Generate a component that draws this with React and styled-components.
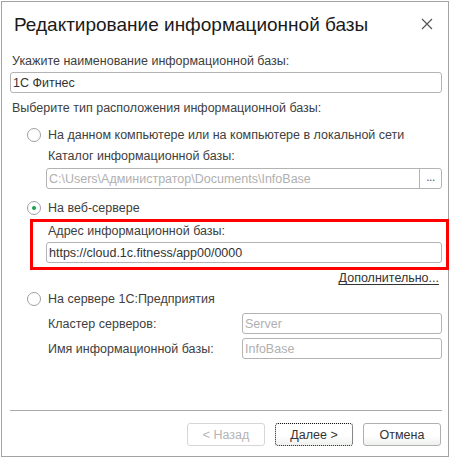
import React from "react";
import styled, { createGlobalStyle } from "styled-components";

const Global = createGlobalStyle`
  html, body { margin: 0; padding: 0; background: #fff; }
  body { font-family: "Liberation Sans", Arial, sans-serif; }
  * { box-sizing: border-box; }
`;

const Frame = styled.div`
  margin: 1px 0 0 1px;
  width: 448px;
  height: 456px;
  border: 1px solid #a3a3a3;
  background: #fff;
  display: flex;
  flex-direction: column;
  color: #404040;
  font-size: 12.5px;
`;

const Header = styled.div`
  display: flex;
  align-items: center;
  justify-content: space-between;
  height: 44px;
  padding: 0 15px 0 12px;
`;

const Title = styled.div`
  font-size: 19px;
  color: #1a1a1a;
  line-height: 24px;
  margin-top: 2px;
`;

const Close = styled.button`
  border: 0;
  background: none;
  padding: 0;
  width: 12px;
  height: 12px;
  display: flex;
`;

const Body = styled.div`
  flex: 1;
  display: flex;
  flex-direction: column;
  padding: 0 6px 0 8px;
`;

const Label = styled.div`
  line-height: 16px;
  height: 16px;
  margin-top: ${(p) => p.$mt || 0}px;
  margin-left: ${(p) => p.$ml ?? 2}px;
  white-space: nowrap;
`;

const Field = styled.div`
  height: 21px;
  margin-top: ${(p) => p.$mt || 0}px;
  margin-left: ${(p) => p.$ml || 0}px;
  border: 1px solid #b3b3b3;
  border-radius: 3px;
  display: flex;
  align-items: center;
  color: ${(p) => (p.$disabled ? "#b0b0b0" : "#333")};
  background: #fff;
  overflow: hidden;
`;

const FieldText = styled.span`
  flex: 1;
  padding-left: 2px;
  white-space: nowrap;
`;

const Choose = styled.span`
  width: 22px;
  height: 100%;
  border-left: 1px solid #b3b3b3;
  display: flex;
  align-items: center;
  justify-content: center;
  color: #555;
  font-size: 12px;
  letter-spacing: -0.5px;
  padding-bottom: 3px;
`;

const RadioRow = styled.label`
  display: flex;
  align-items: center;
  gap: 7px;
  height: 16px;
  margin-top: ${(p) => p.$mt || 0}px;
  margin-left: 17px;
  white-space: nowrap;
`;

const Radio = styled.span`
  width: 14px;
  height: 14px;
  border-radius: 50%;
  border: 1px solid #a0a0a0;
  background: #fff;
  display: flex;
  align-items: center;
  justify-content: center;
  &::after {
    content: "";
    width: 4px;
    height: 4px;
    border-radius: 50%;
    background: ${(p) => (p.$on ? "#16a04a" : "transparent")};
  }
`;

const Highlight = styled.div`
  margin-top: 3px;
  margin-left: 20px;
  margin-right: -7px;
  height: 51px;
  border: 3px solid #f00;
  padding: 1px 4px 0 13px;
  display: flex;
  flex-direction: column;
`;

const MoreLink = styled.a`
  align-self: flex-end;
  line-height: 16px;
  height: 16px;
  margin-right: 3px;
  color: #333;
  text-decoration: underline;
  text-underline-offset: 2px;
`;

const ParamRow = styled.div`
  display: grid;
  grid-template-columns: 196px 1fr;
  align-items: center;
  margin-top: ${(p) => p.$mt || 0}px;
  margin-left: 36px;
  height: 21px;
`;

const Footer = styled.div`
  padding: 0 6px 10px 8px;
`;

const Separator = styled.div`
  height: 1px;
  background: #a8a8a8;
`;

const Buttons = styled.div`
  display: flex;
  justify-content: flex-end;
  gap: 10px;
  margin-top: 12px;
  padding-right: 1px;
`;

const Button = styled.button`
  width: 78px;
  height: 23px;
  font-family: inherit;
  font-size: 12.5px;
  border-radius: 3px;
  padding: 0;
  border: 1px ${(p) => (p.$focus ? "dotted #111" : "solid #b0b0b0")};
  border-color: ${(p) => (p.$disabled ? "#d6d6d6" : undefined)};
  color: ${(p) => (p.$disabled ? "#b4b4b4" : "#333")};
  background: ${(p) =>
    p.$disabled ? "#fff" : "linear-gradient(#ffffff 0%, #ffffff 55%, #eef0ee 100%)"};
`;

export default function App() {
  return (
    <>
      <Global />
      <Frame>
        <Header>
          <Title>Редактирование информационной базы</Title>
          <Close aria-label="Закрыть">
            <svg width="12" height="12" viewBox="0 0 12 12">
              <path d="M1 1L11 11M11 1L1 11" stroke="#555" strokeWidth="1.2" />
            </svg>
          </Close>
        </Header>
        <Body>
          <Label $mt={7}>Укажите наименование информационной базы:</Label>
          <Field $mt={3}>
            <FieldText>1С Фитнес</FieldText>
          </Field>
          <Label $mt={7}>Выберите тип расположения информационной базы:</Label>

          <RadioRow $mt={11}>
            <Radio />
            На данном компьютере или на компьютере в локальной сети
          </RadioRow>
          <Label $mt={5} $ml={38}>Каталог информационной базы:</Label>
          <Field $mt={4} $ml={36} $disabled>
            <FieldText>C:\Users\Администратор\Documents\InfoBase</FieldText>
            <Choose>...</Choose>
          </Field>

          <RadioRow $mt={11}>
            <Radio $on />
            На веб-сервере
          </RadioRow>
          <Highlight>
            <Label>Адрес информационной базы:</Label>
            <Field $mt={3}>
              <FieldText>https://cloud.1c.fitness/app00/0000</FieldText>
            </Field>
          </Highlight>
          <MoreLink>Дополнительно...</MoreLink>

          <RadioRow $mt={5}>
            <Radio />
            На сервере 1С:Предприятия
          </RadioRow>
          <ParamRow $mt={6}>
            <Label>Кластер серверов:</Label>
            <Field $disabled>
              <FieldText>Server</FieldText>
            </Field>
          </ParamRow>
          <ParamRow $mt={4}>
            <Label>Имя информационной базы:</Label>
            <Field $disabled>
              <FieldText>InfoBase</FieldText>
            </Field>
          </ParamRow>
        </Body>
        <Footer>
          <Separator />
          <Buttons>
            <Button $disabled>&lt; Назад</Button>
            <Button $focus>Далее &gt;</Button>
            <Button>Отмена</Button>
          </Buttons>
        </Footer>
      </Frame>
    </>
  );
}
